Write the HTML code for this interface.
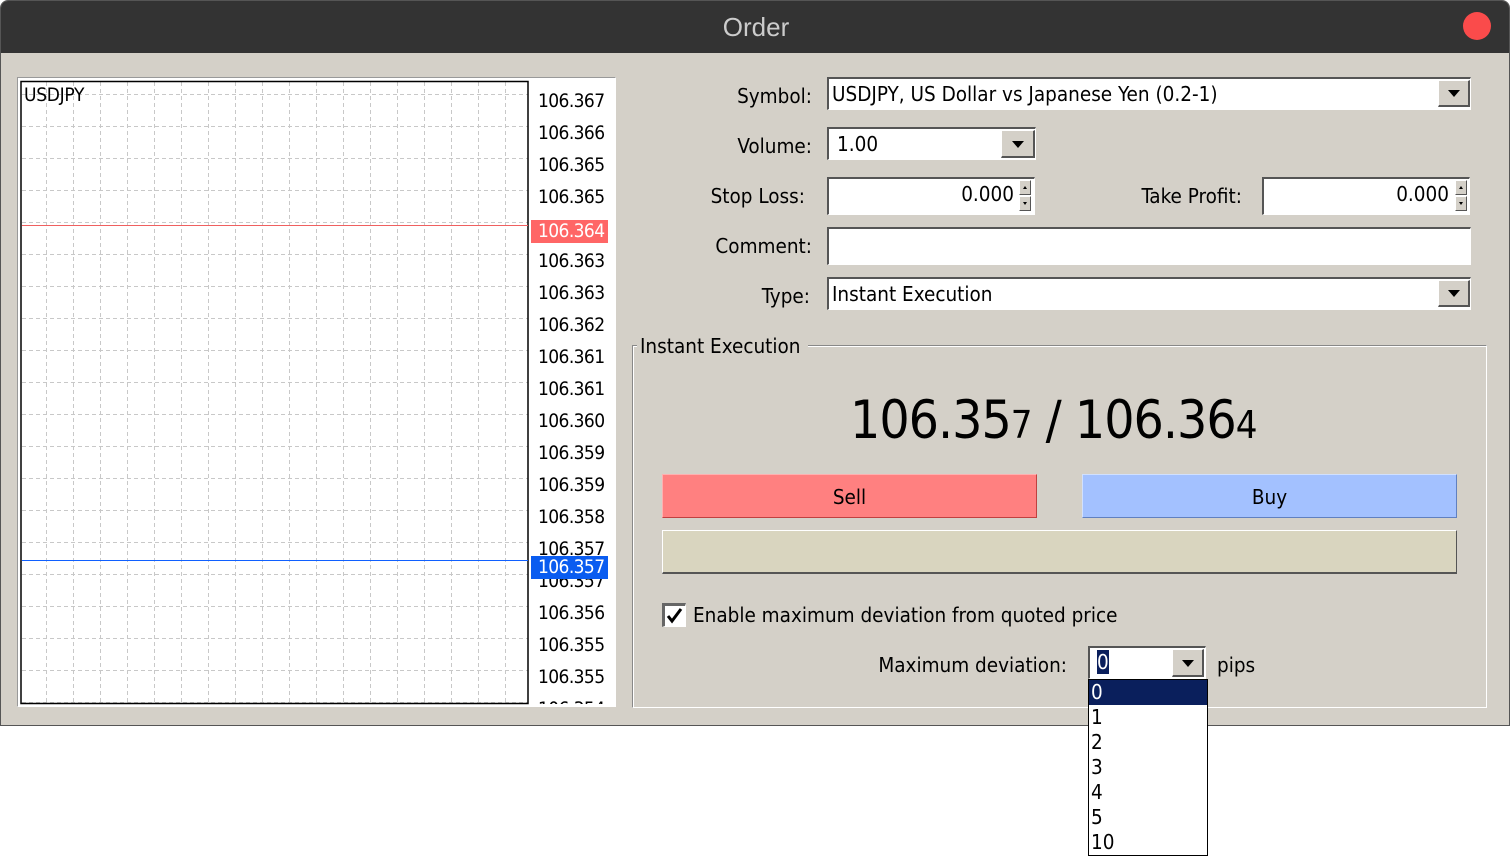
<!DOCTYPE html>
<html><head><meta charset="utf-8"><style>
*{margin:0;padding:0;box-sizing:border-box}
body{width:1510px;height:856px;background:#fff;position:relative;overflow:hidden;font-family:"DejaVu Sans Condensed","Liberation Sans",sans-serif;font-size:20.5px;color:#000}
.a{position:absolute}
.win{left:0;top:0;width:1510px;height:726px;background:#d4d0c8;border:1px solid #555;border-radius:8px 8px 0 0;overflow:hidden}
.title{left:0;top:0;width:1510px;height:52px;background:#333;color:#ccc;font-family:"Liberation Sans",sans-serif;font-size:26px;text-align:center;line-height:52px}
.field{background:#fff;border-top:2px solid #555;border-left:2px solid #555;border-bottom:1px solid #fff;border-right:1px solid #fff;white-space:nowrap;overflow:hidden}
.dd{background:#d4d0c8;border:1px solid #fff;border-right:2px solid #555;border-bottom:2px solid #555}
.dd:after{content:"";position:absolute;left:50%;top:50%;margin:-3px 0 0 -6px;border-left:6px solid transparent;border-right:6px solid transparent;border-top:7px solid #000}
.sp{background:#d4d0c8;border:1px solid #fff;border-right:1px solid #555;border-bottom:1px solid #555;width:12px;height:15px}
.up:after{content:"";position:absolute;left:3px;top:5px;border-left:2px solid transparent;border-right:2px solid transparent;border-bottom:3px solid #000}
.dn:after{content:"";position:absolute;left:3px;top:5px;border-left:2px solid transparent;border-right:2px solid transparent;border-top:3px solid #000}
.lbl{text-align:right;white-space:nowrap}
.pr div{letter-spacing:-0.6px}
</style></head><body>
<div class="a win">
<div class="a title">Order</div>
<div class="a" style="left:1462px;top:11px;width:28px;height:28px;border-radius:50%;background:#fa4b4b"></div>
</div>
<div class="a" style="left:17px;top:77px;width:599px;height:630px;background:#fff;border:1px solid #999;border-right-color:#fff;border-bottom-color:#fff"></div>
<svg class="a" style="left:0;top:0" width="620" height="720">
<g stroke="#c8c8c8" stroke-dasharray="4 3" stroke-width="1">
<path d="M46.5 82V703M73.5 82V703M100.5 82V703M127.5 82V703M154.5 82V703M181.5 82V703M208.5 82V703M235.5 82V703M262.5 82V703M289.5 82V703M316.5 82V703M343.5 82V703M370.5 82V703M397.5 82V703M424.5 82V703M451.5 82V703M478.5 82V703M505.5 82V703"/>
<path d="M22 94.5H528M22 126.5H528M22 158.5H528M22 190.5H528M22 222.5H528M22 254.5H528M22 286.5H528M22 318.5H528M22 350.5H528M22 382.5H528M22 414.5H528M22 446.5H528M22 478.5H528M22 510.5H528M22 542.5H528M22 574.5H528M22 606.5H528M22 638.5H528M22 670.5H528M22 702.5H528"/>
</g>
<rect x="21" y="81.5" width="507" height="622" fill="none" stroke="#000" stroke-width="1.5"/>
<line x1="22" y1="225.5" x2="528" y2="225.5" stroke="#f06060"/>
<line x1="22" y1="560.5" x2="528" y2="560.5" stroke="#1060ff"/>
</svg>
<div class="a" style="left:24px;top:84px;font-size:19px;letter-spacing:-0.3px">USDJPY</div>
<div class="a pr" style="left:530px;top:82px;width:84px;height:622px;overflow:hidden;font-size:19px">
<div class="a" style="left:8px;top:8px">106.367</div>
<div class="a" style="left:8px;top:40px">106.366</div>
<div class="a" style="left:8px;top:72px">106.365</div>
<div class="a" style="left:8px;top:104px">106.365</div>
<div class="a" style="left:8px;top:168px">106.363</div>
<div class="a" style="left:8px;top:200px">106.363</div>
<div class="a" style="left:8px;top:232px">106.362</div>
<div class="a" style="left:8px;top:264px">106.361</div>
<div class="a" style="left:8px;top:296px">106.361</div>
<div class="a" style="left:8px;top:328px">106.360</div>
<div class="a" style="left:8px;top:360px">106.359</div>
<div class="a" style="left:8px;top:392px">106.359</div>
<div class="a" style="left:8px;top:424px">106.358</div>
<div class="a" style="left:8px;top:456px">106.357</div>
<div class="a" style="left:8px;top:488px">106.357</div>
<div class="a" style="left:8px;top:520px">106.356</div>
<div class="a" style="left:8px;top:552px">106.355</div>
<div class="a" style="left:8px;top:584px">106.355</div>
<div class="a" style="left:8px;top:616px">106.354</div>
<div class="a" style="left:1px;top:138px;width:77px;height:23px;background:#ff6666;color:#fff;padding-left:7px">106.364</div>
<div class="a" style="left:1px;top:474px;width:77px;height:23px;background:#0a5cf0;color:#fff;padding-left:7px">106.357</div>
</div>
<div class="a lbl" style="left:600px;width:212px;top:84px">Symbol:</div>
<div class="a field" style="left:827px;top:77px;width:644px;height:33px;padding:3px 3px">USDJPY, US Dollar vs Japanese Yen (0.2-1)</div>
<div class="a dd" style="left:1438px;top:80px;width:32px;height:27px"></div>
<div class="a lbl" style="left:600px;width:212px;top:134px">Volume:</div>
<div class="a field" style="left:827px;top:127px;width:209px;height:33px;padding:3px 8px">1.00</div>
<div class="a dd" style="left:1001px;top:130px;width:34px;height:28px"></div>
<div class="a lbl" style="left:600px;width:205px;top:184px">Stop Loss:</div>
<div class="a field" style="left:827px;top:177px;width:208px;height:38px;padding:3px 20px 0 0;text-align:right">0.000</div>
<div class="a sp up" style="left:1019px;top:180px"></div>
<div class="a sp dn" style="left:1019px;top:196px"></div>
<div class="a lbl" style="left:1050px;width:192px;top:184px">Take Profit:</div>
<div class="a field" style="left:1262px;top:177px;width:208px;height:38px;padding:3px 20px 0 0;text-align:right">0.000</div>
<div class="a sp up" style="left:1455px;top:180px"></div>
<div class="a sp dn" style="left:1455px;top:196px"></div>
<div class="a lbl" style="left:600px;width:212px;top:234px">Comment:</div>
<div class="a field" style="left:827px;top:227px;width:644px;height:38px"></div>
<div class="a lbl" style="left:600px;width:210px;top:284px">Type:</div>
<div class="a field" style="left:827px;top:277px;width:644px;height:33px;padding:3px 3px">Instant Execution</div>
<div class="a dd" style="left:1438px;top:280px;width:32px;height:27px"></div>
<div class="a" style="left:632px;top:345px;width:855px;height:363px;border:1px solid #888;border-right-color:#fff;border-bottom-color:#fff;box-shadow:inset 1px 1px 0 #fff"></div>
<div class="a" style="left:637px;top:334px;background:#d4d0c8;padding:0 8px 0 3px">Instant Execution</div>
<div class="a" style="left:850px;top:389px;font-size:53px;line-height:64px;white-space:nowrap;letter-spacing:-1px">106.35<span style="font-size:38px">7</span> / 106.36<span style="font-size:38px">4</span></div>
<div class="a" style="left:662px;top:474px;width:375px;height:44px;background:#ff8080;border:1px solid #ffb0b0;border-right-color:#c04040;border-bottom-color:#c04040;text-align:center;line-height:44px">Sell</div>
<div class="a" style="left:1082px;top:474px;width:375px;height:44px;background:#a3c1ff;border:1px solid #d0e0ff;border-right-color:#6080c0;border-bottom-color:#6080c0;text-align:center;line-height:44px">Buy</div>
<div class="a" style="left:662px;top:530px;width:795px;height:44px;background:#d9d5bf;border:1px solid #fff;border-right-color:#555;border-bottom:2px solid #555"></div>
<div class="a" style="left:662px;top:603px;width:24px;height:24px;background:#fff;border-top:3px solid #666;border-left:3px solid #666;border-right:1px solid #fff;border-bottom:1px solid #fff"><svg width="20" height="20" style="position:absolute;left:0;top:0"><path d="M3 10l4 5 9-12" fill="none" stroke="#000" stroke-width="3"/></svg></div>
<div class="a" style="left:693px;top:603px">Enable maximum deviation from quoted price</div>
<div class="a lbl" style="left:800px;width:267px;top:653px">Maximum deviation:</div>
<div class="a field" style="left:1088px;top:646px;width:118px;height:33px;padding:2px 7px"><span style="background:#0a1f5c;color:#fff">0</span></div>
<div class="a dd" style="left:1172px;top:649px;width:32px;height:28px"></div>
<div class="a" style="left:1217px;top:653px">pips</div>
<div class="a" style="left:1088px;top:679px;width:120px;height:177px;background:#fff;border:1px solid #000;line-height:25px;padding-left:2px">
<div style="background:#0a1f5c;color:#fff;margin-left:-2px;padding-left:2px">0</div><div>1</div><div>2</div><div>3</div><div>4</div><div>5</div><div>10</div></div>
</body></html>
